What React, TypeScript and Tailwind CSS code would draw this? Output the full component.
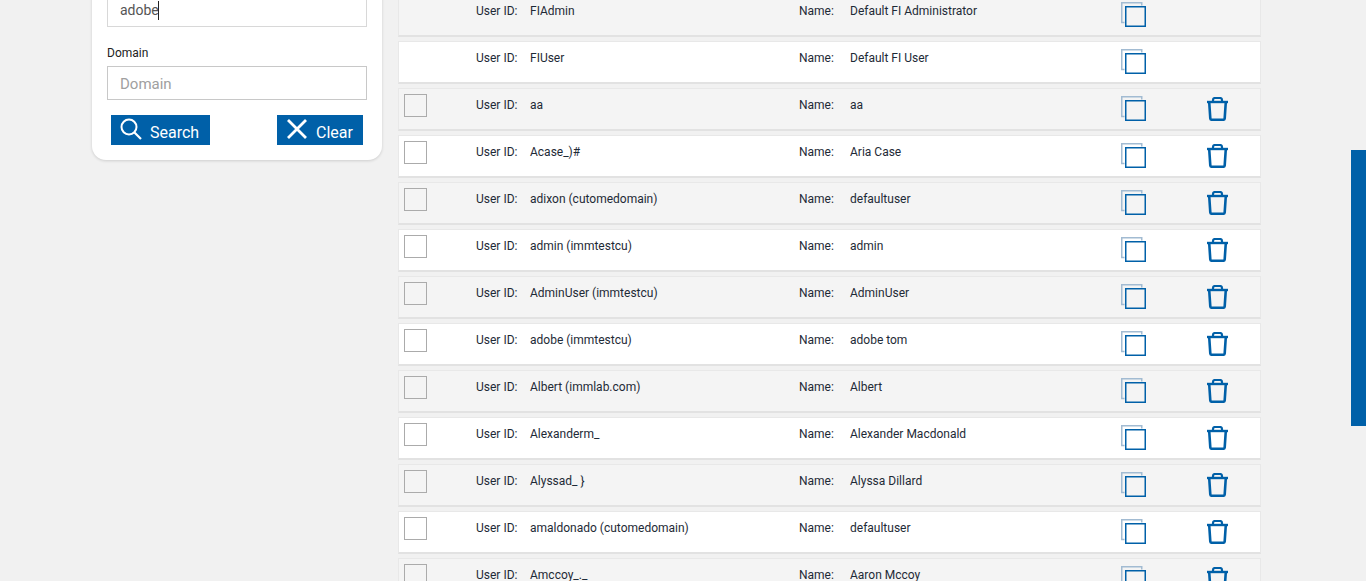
const users = [
  { id: "FIAdmin", name: "Default FI Administrator", locked: true },
  { id: "FIUser", name: "Default FI User", locked: true },
  { id: "aa", name: "aa" },
  { id: "Acase_)#", name: "Aria Case" },
  { id: "adixon (cutomedomain)", name: "defaultuser" },
  { id: "admin (immtestcu)", name: "admin" },
  { id: "AdminUser (immtestcu)", name: "AdminUser" },
  { id: "adobe (immtestcu)", name: "adobe tom" },
  { id: "Albert (immlab.com)", name: "Albert" },
  { id: "Alexanderm_", name: "Alexander Macdonald" },
  { id: "Alyssad_ }", name: "Alyssa Dillard" },
  { id: "amaldonado (cutomedomain)", name: "defaultuser" },
  { id: "Amccoy_._", name: "Aaron Mccoy" },
];

function CopyIcon() {
  return (
    <svg width="25" height="25" viewBox="0 0 25 25" fill="none" className="block">
      <path d="M3.500 20.500H.75V.75h20V3.500" stroke="#a2bbd2" strokeWidth="1.500" />
      <rect x="4.750" y="4.750" width="19.500" height="19.500" stroke="#0060a8" strokeWidth="1.500" />
    </svg>
  );
}

function TrashIcon() {
  return (
    <svg width="21" height="24" viewBox="0 0 21 24" fill="none" className="block">
      <path d="M0 5h21" stroke="#0060a8" strokeWidth="2.400" />
      <path d="M6 5V3c0-1.200.8-2 2-2h5c1.200 0 2 .8 2 2v2" stroke="#0060a8" strokeWidth="2.200" />
      <path d="M2.200 5l1.100 16.300c.1 1 .8 1.500 1.700 1.500h11c.9 0 1.600-.5 1.700-1.500L18.800 5" stroke="#0060a8" strokeWidth="2.600" />
    </svg>
  );
}

function UserRow({ user, odd }: { user: (typeof users)[number]; odd: boolean }) {
  return (
    <div className={`h-[43px] border border-b-2 border-[#e8e8e8] border-b-[#e2e2e2] text-[12px] leading-[14px] text-[#1e2a36] ${odd ? "bg-[#f4f4f4]" : "bg-white"}`}>
      <div className="flex h-full">
        <div className="w-[77px] shrink-0 pl-[5px] pt-[5px]">
          {!user.locked && <div className="h-[23px] w-[23px] border border-[#ababab]" />}
        </div>
        <div className="w-[54px] shrink-0 pt-[9px]">User ID:</div>
        <div className="w-[269px] shrink-0 pt-[9px]">{user.id}</div>
        <div className="w-[51px] shrink-0 pt-[9px]">Name:</div>
        <div className="w-[271px] shrink-0 pt-[9px]">{user.name}</div>
        <div className="w-[86px] shrink-0 pt-[7px]">
          <CopyIcon />
        </div>
        {!user.locked && (
          <div className="pt-[8px]">
            <TrashIcon />
          </div>
        )}
      </div>
    </div>
  );
}

export default function App() {
  return (
    <div className="relative h-[581px] overflow-hidden bg-[#f1f1f1] font-['Roboto',sans-serif]">
      <div className="flex items-start gap-[16px] pl-[92px]">
        <div className="-mt-[60px] w-[290px] rounded-b-[14px] bg-white px-[15px] pb-[15px] pt-[53px] shadow-[0_1px_3px_rgba(0,0,0,0.15)]">
          <div className="flex h-[34px] items-center border border-[#d8d8d8] pl-[12px] pt-[1px] text-[14px] text-[#555]">
            adobe
            <span className="-ml-px h-[19px] w-px bg-[#222]" />
          </div>
          <label className="mb-[6px] mt-[19px] block text-[12px] leading-[14px] text-[#222]">Domain</label>
          <div className="flex h-[34px] items-center border border-[#c8c8c8] pl-[12px] pt-[3px] text-[15px] text-[#a0a0a0]">Domain</div>
          <div className="mt-[15px] flex justify-between px-[4px]">
            <button className="flex h-[30px] w-[99px] items-center bg-[#0060a8] pl-[9px] text-[16px] text-white">
              <svg width="22" height="22" viewBox="0 0 22 22" fill="none" className="-mt-[2px] mr-[8px]">
                <circle cx="9" cy="9" r="7.500" stroke="white" strokeWidth="2" />
                <path d="M14.500 14.500 21 21" stroke="white" strokeWidth="2.200" />
              </svg>
              <span className="mt-[6px]">Search</span>
            </button>
            <button className="flex h-[30px] w-[86px] items-center bg-[#0060a8] pl-[10px] text-[16px] text-white">
              <svg width="20" height="20" viewBox="0 0 20 20" fill="none" className="-mt-[2px] mr-[9px]">
                <path d="M1 1l18 18M19 1 1 19" stroke="white" strokeWidth="2.800" />
              </svg>
              <span className="mt-[6px]">Clear</span>
            </button>
          </div>
        </div>
        <div className="-mt-[6px] flex w-[863px] flex-col gap-[4px]">
          {users.map((user, i) => (
            <UserRow key={user.id} user={user} odd={i % 2 === 0} />
          ))}
        </div>
      </div>
      <div className="absolute right-0 top-[150px] h-[276px] w-[15px] bg-[#0060a8]" />
    </div>
  );
}
